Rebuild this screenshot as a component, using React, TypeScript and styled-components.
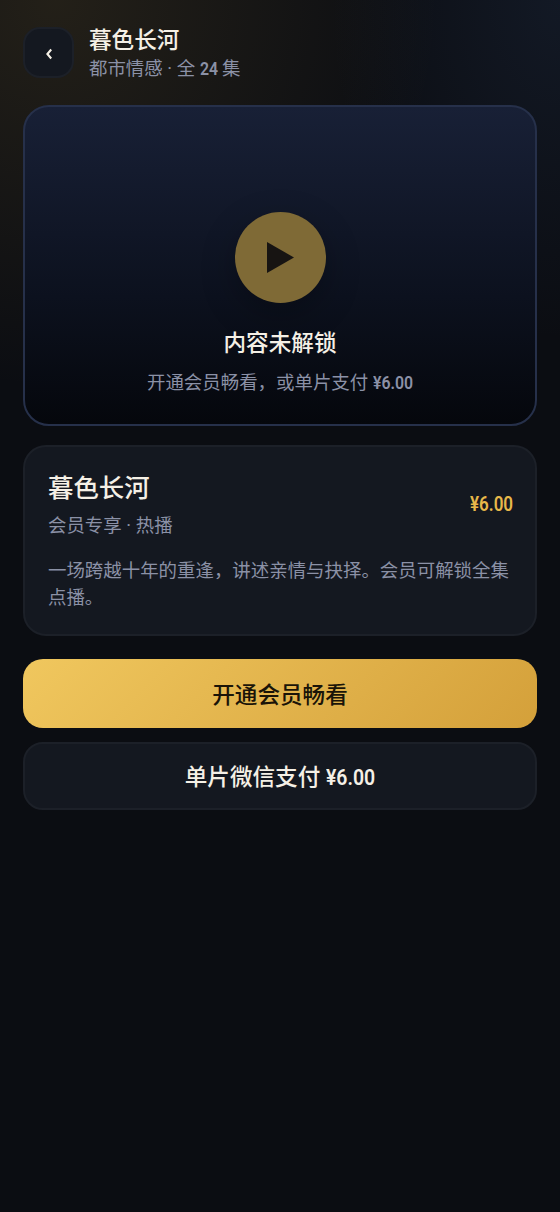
import React from "react";
import styled, { createGlobalStyle, css } from "styled-components";

const GlobalStyle = createGlobalStyle`
  * { box-sizing: border-box; }
  body {
    margin: 0;
    background: #0b0d12;
    color: #f5f0e6;
    font-family: Roboto, "Noto Sans CJK SC", sans-serif;
  }
  button { font: inherit; color: inherit; }
`;

const Page = styled.main`
  min-height: 1212px;
  padding: 22px 23px;
  display: flex;
  flex-direction: column;
  background:
    radial-gradient(ellipse 385px 390px at 56px 0, rgba(232, 184, 74, 0.11), transparent),
    radial-gradient(ellipse 230px 340px at 560px 0, rgba(70, 105, 165, 0.13), transparent),
    #0b0d12;
`;

const Header = styled.header`
  display: flex;
  align-items: center;
  gap: 15px;
  height: 61px;
`;

const BackButton = styled.button`
  display: flex;
  align-items: center;
  justify-content: center;
  width: 51px;
  height: 51px;
  padding: 2px 0 0 1px;
  border: 2px solid #1c2028;
  border-radius: 17px;
  background: #141820;
`;

const HeaderText = styled.div`
  display: flex;
  flex-direction: column;
  padding-top: 4px;
`;

const Title = styled.h1<{ $large?: boolean }>`
  margin: 0;
  font-weight: 500;
  font-size: ${(p) => (p.$large ? 25.4 : 22.6)}px;
  line-height: ${(p) => (p.$large ? 38 : 30)}px;
`;

const Muted = styled.p`
  margin: 0;
  font-size: 18.45px;
  line-height: 27px;
  color: #8b91a6;
`;

/* Narrow numerals: the glyphs are condensed and the freed width is taken back by the margin. */
const Num = styled.span<{ $gold?: boolean; $short?: boolean }>`
  display: inline-block;
  font-weight: 600;
  transform: scaleX(0.86);
  transform-origin: left center;
  margin-right: ${(p) => (p.$short ? "-0.18em" : "-0.35em")};
  ${(p) => p.$gold && css`
    font-size: 19.8px;
    margin-top: -1px;
    color: #e8b84a;
  `}
`;

const Player = styled.section`
  display: flex;
  flex-direction: column;
  align-items: center;
  height: 321px;
  margin-top: 22px;
  padding-top: 105px;
  border: 2px solid #26304a;
  border-radius: 26px;
  background: linear-gradient(180deg, #182036 0%, #0c111e 60%, #05070c 100%);
`;

const PlayButton = styled.button`
  display: flex;
  align-items: center;
  justify-content: center;
  width: 91px;
  height: 91px;
  padding: 0;
  border: 0;
  border-radius: 50%;
  background: #7f6a36;
  box-shadow: 0 11px 34px rgba(0, 0, 0, 0.25);
`;

const PlayerTitle = styled.h2`
  margin: 24px 0 9px;
  font-size: 22.6px;
  font-weight: 500;
  line-height: 34px;
`;

const Card = styled.section`
  height: 191px;
  margin-top: 19px;
  padding: 22px 22px 0 23px;
  border: 2px solid #1c2028;
  border-radius: 23px;
  background: #141820;
`;

const CardHead = styled.div`
  display: flex;
  align-items: center;
  justify-content: space-between;
  margin-bottom: 18px;
`;

const CardTitles = styled.div`
  display: flex;
  flex-direction: column;
  gap: 6px;
`;

const ActionButton = styled.button<{ $primary?: boolean }>`
  height: ${(p) => (p.$primary ? 69 : 68)}px;
  margin-top: ${(p) => (p.$primary ? 23 : 14)}px;
  padding: ${(p) => (p.$primary ? "0" : "0 0 2px")};
  border: ${(p) => (p.$primary ? "0" : "2px solid #1c2028")};
  border-radius: 20px;
  background: ${(p) => (p.$primary ? "linear-gradient(135deg, #f0c75e, #d4a03a)" : "#141820")};
  color: ${(p) => (p.$primary ? "#1a1408" : "#f5f0e6")};
  font-size: 22.6px;
  font-weight: 500;
`;

export default function App() {
  return (
    <>
      <GlobalStyle />
      <Page>
        <Header>
          <BackButton aria-label="返回">
            <svg width="8" height="12" viewBox="0 0 8 12" fill="none" stroke="#f5f0e6" strokeWidth="2.1">
              <path d="M6.2 1.5 2.4 6l3.8 4.5" />
            </svg>
          </BackButton>
          <HeaderText>
            <Title>暮色长河</Title>
            <Muted>都市情感 · 全 <Num $short>24</Num> 集</Muted>
          </HeaderText>
        </Header>
        <Player>
          <PlayButton aria-label="播放">
            <svg width="27" height="31" viewBox="0 0 27 31">
              <path d="M0 0 27 15.5 0 31z" fill="#171412" />
            </svg>
          </PlayButton>
          <PlayerTitle>内容未解锁</PlayerTitle>
          <Muted>开通会员畅看，或单片支付 <Num>¥6.00</Num></Muted>
        </Player>
        <Card>
          <CardHead>
            <CardTitles>
              <Title as="h2" $large>暮色长河</Title>
              <Muted>会员专享 · 热播</Muted>
            </CardTitles>
            <Num $gold>¥6.00</Num>
          </CardHead>
          <Muted>一场跨越十年的重逢，讲述亲情与抉择。会员可解锁全集点播。</Muted>
        </Card>
        <ActionButton $primary>开通会员畅看</ActionButton>
        <ActionButton>单片微信支付 <Num>¥6.00</Num></ActionButton>
      </Page>
    </>
  );
}
